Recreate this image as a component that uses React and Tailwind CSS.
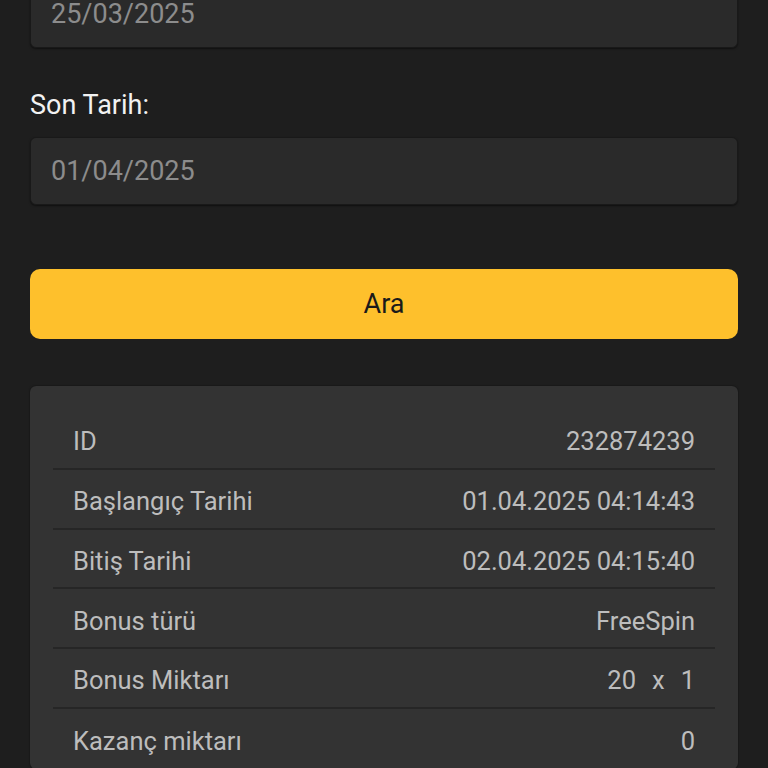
const rows = [
  ["ID", "232874239"],
  ["Başlangıç Tarihi", "01.04.2025 04:14:43"],
  ["Bitiş Tarihi", "02.04.2025 04:15:40"],
  ["Bonus türü", "FreeSpin"],
  ["Bonus Miktarı", ["20", "x", "1"]],
  ["Kazanç miktarı", "0"],
];

export default function App() {
  return (
    <div
      className="h-[768px] overflow-hidden bg-[#1e1e1e] px-[30px]"
      style={{ fontFamily: "Roboto, 'Noto Sans', sans-serif" }}
    >
      {/* Başlangıç tarihi input (scrolled up) */}
      <div className="-mt-[20px] flex h-[68px] items-center rounded-md border border-[#191919] bg-[#2a2a2a] px-[20px] text-[27px] text-[#8c8c8c] shadow-[0_1px_2px_rgba(0,0,0,0.5)]">
        25/03/2025
      </div>

      <div className="mt-[40px] text-[27px] leading-[34px] text-[#f2f2f2]">Son Tarih:</div>

      <div className="mt-[15px] flex h-[68px] items-center rounded-md border border-[#191919] bg-[#2a2a2a] px-[20px] text-[27px] text-[#8c8c8c] shadow-[0_1px_2px_rgba(0,0,0,0.5)]">
        01/04/2025
      </div>

      <button className="mt-[64px] flex h-[70px] w-full items-center justify-center rounded-[10px] bg-[#fec02c] text-[27px] text-[#1a1a1a]">
        Ara
      </button>

      <div className="mt-[47px] rounded-md bg-[#333333] px-[23px] pt-[24px] shadow-[0_0_2px_rgba(0,0,0,0.6)]">
        {rows.map(([k, v], i) => (
          <div
            key={k}
            className={
              "flex h-[59.8px] items-center justify-between px-[20px] pt-[5px] text-[25.5px] text-[#bdbdbd] " +
              (i < rows.length - 1 ? "border-b-2 border-[#262626]" : "")
            }
          >
            <span>{k}</span>
            {Array.isArray(v) ? (
              <span className="flex gap-[16px]">
                {v.map((p) => (
                  <span key={p}>{p}</span>
                ))}
              </span>
            ) : (
              <span>{v}</span>
            )}
          </div>
        ))}
      </div>
    </div>
  );
}
